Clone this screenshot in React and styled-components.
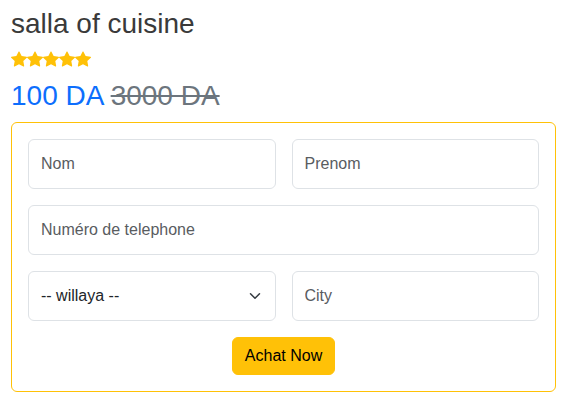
import styled, { createGlobalStyle } from "styled-components";

const GlobalStyle = createGlobalStyle`
  body {
    margin: 0;
    font-family: "Liberation Sans", Arial, sans-serif;
    background: #fff;
  }
`;

const Star = () => (
  <svg width="16" height="16" viewBox="0 0 16 16">
    <path
      fill="#ffc107"
      d="M3.612 15.443c-.386.198-.824-.149-.746-.592l.83-4.73L.173 6.765c-.329-.314-.158-.888.283-.95l4.898-.696L7.538.792c.197-.39.73-.39.927 0l2.184 4.327 4.898.696c.441.062.612.636.282.95l-3.522 3.356.83 4.73c.078.443-.36.79-.746.592L8 13.187l-4.389 2.256z"
    />
  </svg>
);

const Chevron = () => (
  <svg width="12" height="12" viewBox="0 0 16 16">
    <path
      d="M2 5l6 6 6-6"
      fill="none"
      stroke="#343a40"
      strokeWidth="2"
      strokeLinecap="round"
      strokeLinejoin="round"
    />
  </svg>
);

const App = () => {
  return (
    <Page>
      <GlobalStyle />
      <Title>salla of cuisine</Title>
      <Stars>
        {[1, 2, 3, 4, 5].map((v) => (
          <Star key={v} />
        ))}
      </Stars>
      <Price>
        <Current>100 DA</Current> <Old>3000 DA</Old>
      </Price>
      <Form>
        <Row>
          <Field placeholder="Nom" />
          <Field placeholder="Prenom" />
        </Row>
        <Row $single>
          <Field placeholder="Numéro de telephone" />
        </Row>
        <Row>
          <SelectBox>
            <span>-- willaya --</span>
            <Chevron />
          </SelectBox>
          <Field placeholder="City" />
        </Row>
        <ButtonRow>
          <Button type="button">Achat Now</Button>
        </ButtonRow>
      </Form>
    </Page>
  );
};

const Page = styled.div`
  width: 545px;
  padding: 7px 13px 0 11px;
`;

const Title = styled.h1`
  margin: 0;
  font-size: 28px;
  font-weight: 400;
  line-height: 34px;
  color: #3a3a3a;
`;

const Stars = styled.div`
  display: flex;
  margin-top: 10px;
  height: 16px;
`;

const Price = styled.div`
  margin-top: 12px;
  font-size: 28px;
  line-height: 34px;
`;

const Current = styled.span`
  color: #0d6efd;
`;

const Old = styled.span`
  color: #6c757d;
  text-decoration: line-through;
`;

const Form = styled.form`
  margin-top: 9px;
  border: 1px solid #ffc107;
  border-radius: 6px;
  padding: 16px;
  display: flex;
  flex-direction: column;
  gap: 16px;
`;

const Row = styled.div`
  display: grid;
  grid-template-columns: ${(p) => (p.$single ? "1fr" : "1fr 1fr")};
  gap: 16px;
`;

const Field = styled.input`
  box-sizing: border-box;
  width: 100%;
  height: 50px;
  padding: 0 12px;
  border: 1px solid #dee2e6;
  border-radius: 6px;
  font-family: "Liberation Sans", Arial, sans-serif;
  font-size: 16px;
  color: #212529;
  outline: none;

  &::placeholder {
    color: #595c5f;
  }
`;

const SelectBox = styled.div`
  box-sizing: border-box;
  height: 50px;
  padding: 0 14px 0 12px;
  border: 1px solid #dee2e6;
  border-radius: 6px;
  display: flex;
  align-items: center;
  justify-content: space-between;
  font-size: 16px;
  color: #212529;
`;

const ButtonRow = styled.div`
  display: flex;
  justify-content: center;
`;

const Button = styled.button`
  height: 38px;
  padding: 0 12px;
  border: 1px solid #ffc107;
  border-radius: 6px;
  background: #ffc107;
  font-family: "Liberation Sans", Arial, sans-serif;
  font-size: 16px;
  color: #000;
`;

export default App;
